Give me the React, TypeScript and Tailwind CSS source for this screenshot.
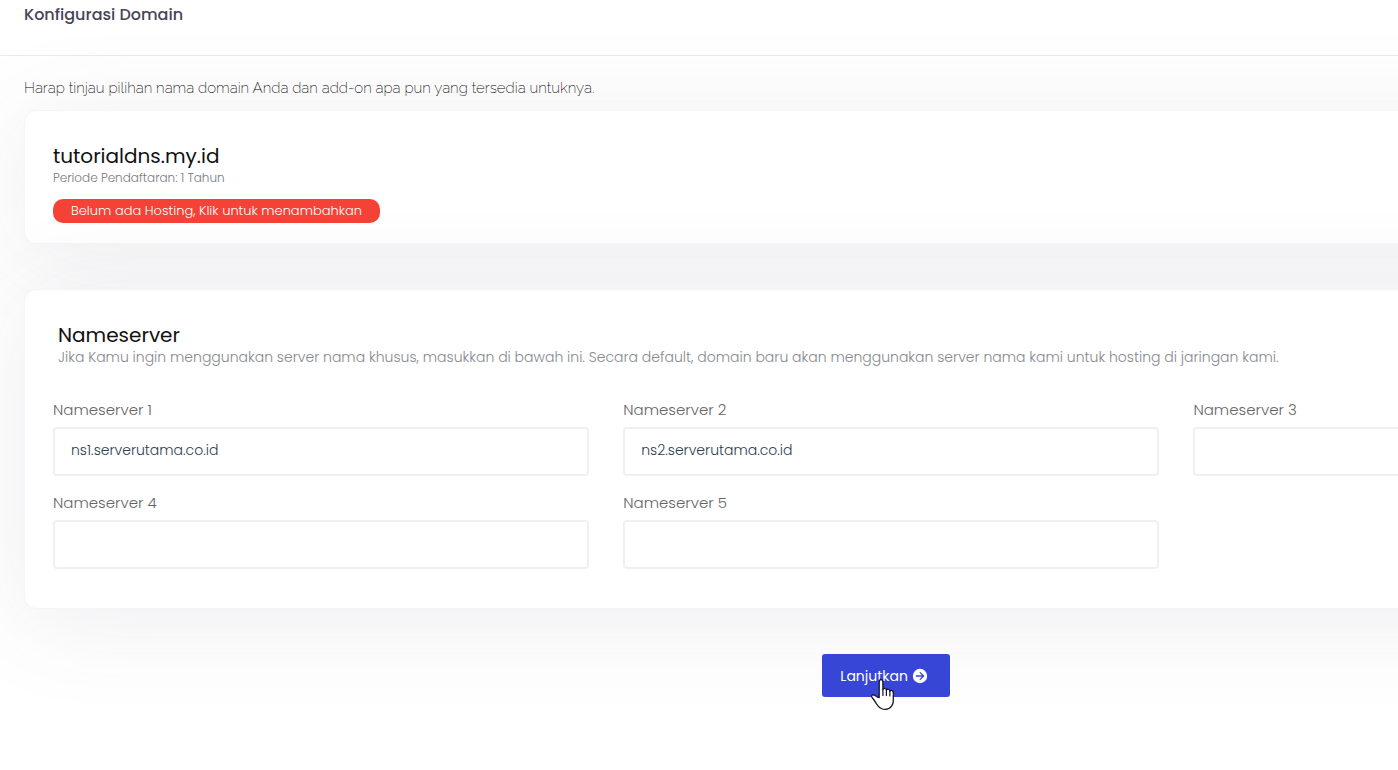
import { useState } from "react";

const initialServers = ["ns1.serverutama.co.id", "ns2.serverutama.co.id", "", "", ""];

function ArrowCircleIcon() {
  return (
    <svg viewBox="0 0 16 16" className="size-4 shrink-0" aria-hidden="true">
      <circle cx="8" cy="8" r="7.2" fill="#fff" />
      <path
        d="M4.300 8h7M8.200 4.600 11.600 8l-3.400 3.400"
        fill="none"
        stroke="#3746d6"
        strokeWidth="1.3"
        strokeLinecap="round"
        strokeLinejoin="round"
      />
    </svg>
  );
}

function HandPointer() {
  return (
    <svg
      viewBox="0 0 26 34"
      className="pointer-events-none absolute top-6 left-12 h-[34px] w-[26px]"
      aria-hidden="true"
    >
      <path
        d="M9.2 19.5V4.2C9.2 2.4 10 1.500 11 1.500s1.900.9 1.900 2.700v7.300c.3-.8.9-1.200 1.600-1.200 1.100 0 1.800.8 1.900 2 .3-.7.900-1.100 1.600-1.100 1.100 0 1.800.8 1.900 2 .3-.5.8-.8 1.400-.8 1.200 0 2 .9 2 2.300v8.300c0 2-.6 3.600-1.700 5.200-1.500 2.100-3.500 3.200-6.300 3.200-3.200 0-5.300-1.200-7.300-3.600-1.800-2.200-3.400-5.400-5.600-7.800-.9-1-1.200-1.900-.6-2.600.7-.8 2-.7 3.200.1 1.500 1 2.800 2.200 4.200 2z"
        fill="#fff"
        stroke="#16162a"
        strokeWidth="1.3"
        strokeLinejoin="round"
      />
      <path d="M12.900 11.500v6M16.400 12.300v5.200M19.900 13.200v4.800" stroke="#16162a" strokeWidth="1.2" strokeLinecap="round" />
    </svg>
  );
}

export default function App() {
  const [servers, setServers] = useState(initialServers);

  const update = (index: number, value: string) =>
    setServers(servers.map((server, i) => (i === index ? value : server)));

  return (
    <div className="min-h-screen overflow-x-hidden bg-white font-['Poppins','Inter',sans-serif]">
      <div className="w-[126.8%]">
        <header className="border-b border-[#ebebee] px-6 pt-[3px] pb-7">
          <h1 className="text-base leading-6 font-medium text-[#464457]">Konfigurasi Domain</h1>
        </header>

        <main className="px-6 pt-5 pb-18">
          <p className="font-['Raleway','Lato',sans-serif] text-[15px] leading-6 font-extralight text-black">
            Harap tinjau pilihan nama domain Anda dan add-on apa pun yang tersedia untuknya.
          </p>

          <section className="mt-2.5 rounded-xl border border-[#f5f5f7] bg-white px-7 pt-[31px] pb-5 shadow-[0_10px_100px_rgba(82,82,108,0.1)]">
            <h2 className="text-xl leading-7 font-normal text-[#111]">tutorialdns.my.id</h2>
            <p className="text-xs leading-4 font-light text-[#777b81]">Periode Pendaftaran: 1 Tahun</p>
            <a
              href="#hosting"
              className="mt-[13px] inline-block rounded-[10px] bg-[#f44336] px-[18px] align-top text-[13px] leading-6 font-light text-white"
            >
              Belum ada Hosting, Klik untuk menambahkan
            </a>
          </section>

          <section className="mt-[45px] rounded-xl border border-[#f5f5f7] bg-white pt-[31px] pr-[18px] pb-[39px] pl-7 shadow-[0_10px_100px_rgba(82,82,108,0.1)]">
            <div className="px-[5px]">
              <h2 className="text-xl leading-7 font-normal text-[#111]">Nameserver</h2>
              <p className="text-sm leading-4 font-light text-[#85898f]">
                Jika Kamu ingin menggunakan server nama khusus, masukkan di bawah ini. Secara default, domain baru akan
                menggunakan server nama kami untuk hosting di jaringan kami.
              </p>
            </div>
            <div className="mt-[33px] grid grid-cols-3 gap-x-[34px] gap-y-[15px]">
              {servers.map((server, index) => (
                <div key={index}>
                  <label
                    htmlFor={`nameserver-${index + 1}`}
                    className="block pb-[5px] text-[15px] leading-6 font-light text-[#666]"
                  >
                    Nameserver {index + 1}
                  </label>
                  <input
                    id={`nameserver-${index + 1}`}
                    type="text"
                    value={server}
                    onChange={(event) => update(index, event.target.value)}
                    className="block h-[49px] w-full rounded border-2 border-[#f0f0f0] bg-white px-4 pb-0.5 text-sm font-light text-[#2c3e50] outline-none"
                  />
                </div>
              ))}
            </div>
          </section>

          <div className="mt-[45px] flex justify-center">
            <button
              type="button"
              className="relative flex h-[43px] w-32 items-center gap-1 rounded-[3px] bg-[#3746d6] px-[18px] text-sm font-normal text-white"
            >
              Lanjutkan
              <ArrowCircleIcon />
              <HandPointer />
            </button>
          </div>
        </main>
      </div>
    </div>
  );
}
